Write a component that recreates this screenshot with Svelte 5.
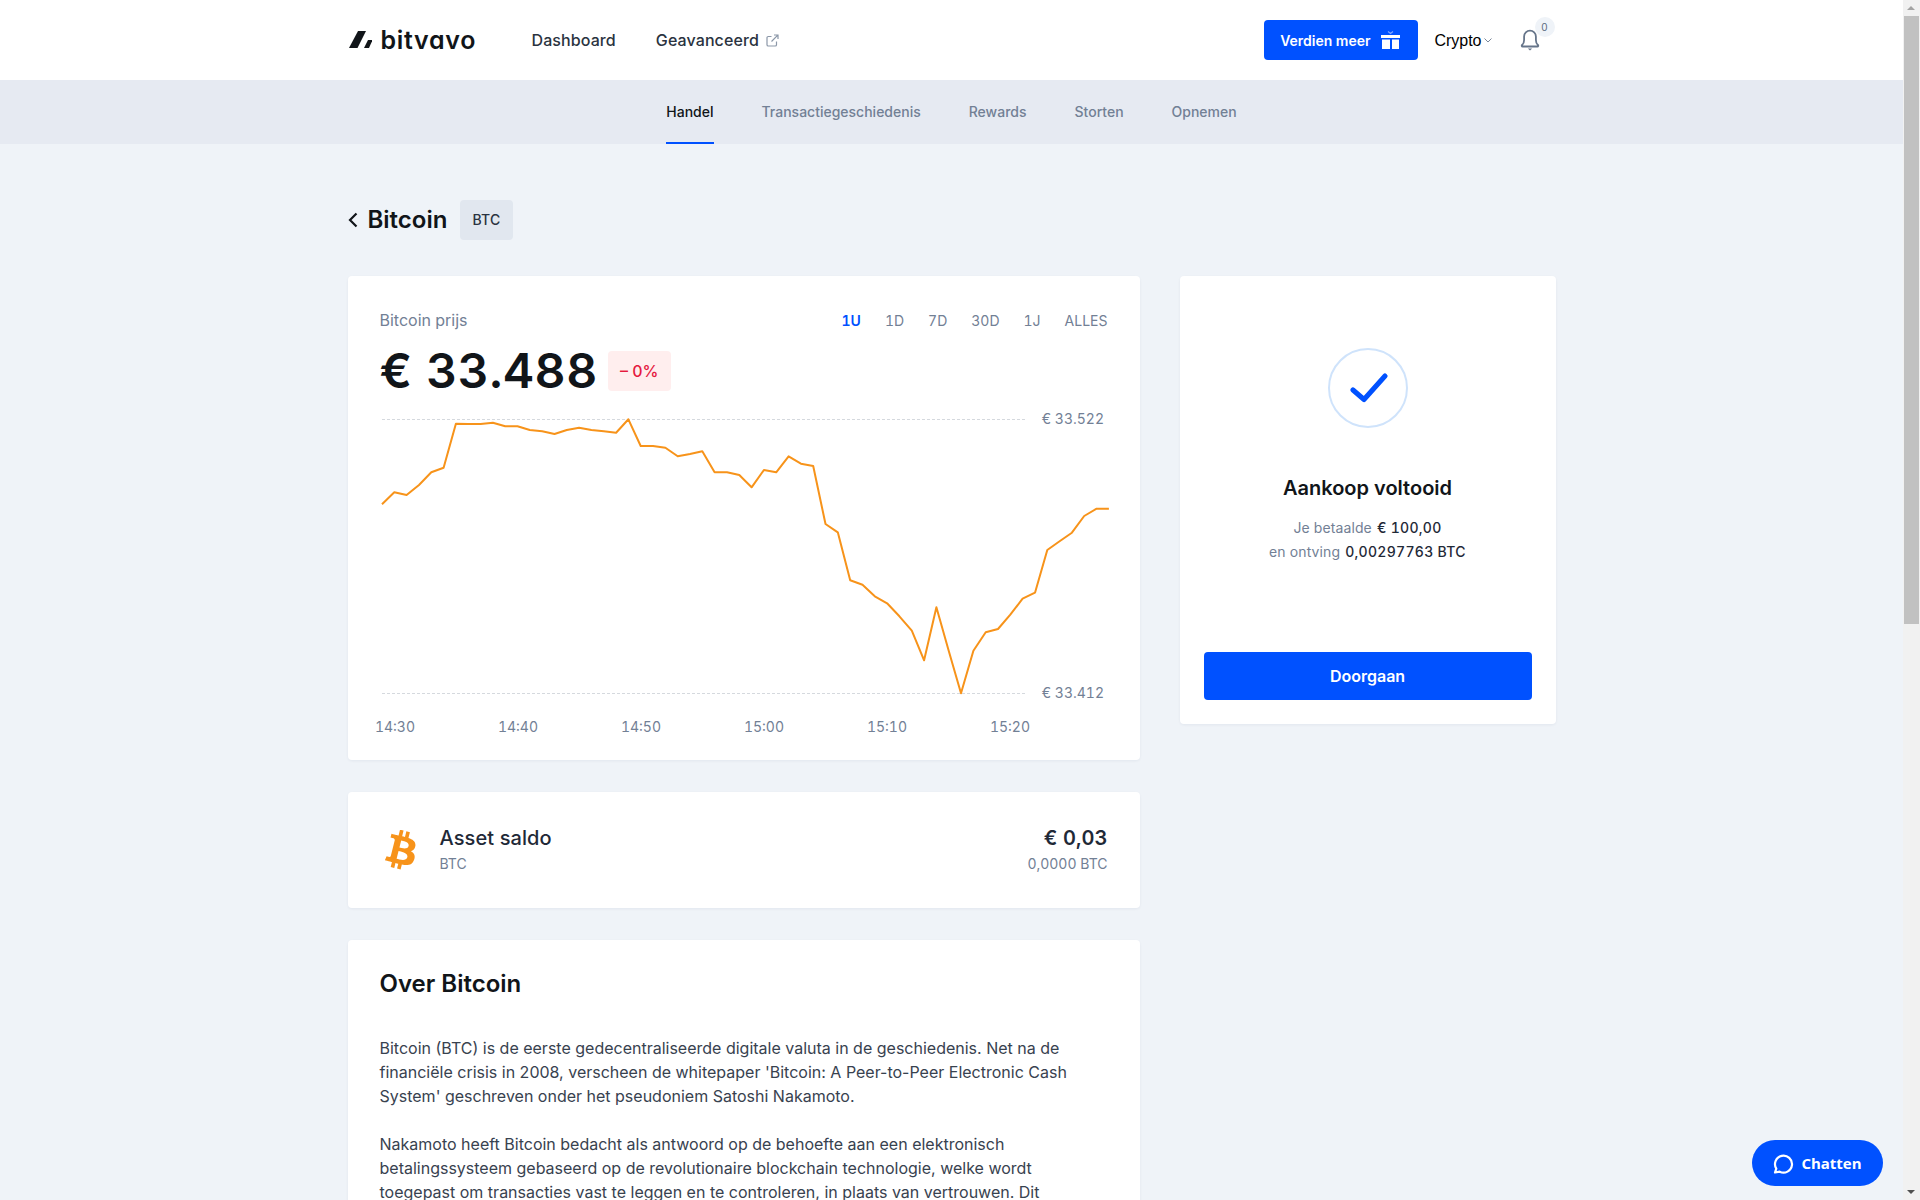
<script>
  const tabs = ['Handel', 'Transactiegeschiedenis', 'Rewards', 'Storten', 'Opnemen'];
  const ranges = ['1U', '1D', '7D', '30D', '1J', 'ALLES'];
  const times = [
    { label: '14:30', x: 47 },
    { label: '14:40', x: 170 },
    { label: '14:50', x: 293 },
    { label: '15:00', x: 416 },
    { label: '15:10', x: 539 },
    { label: '15:20', x: 662 }
  ];

  // y of each price point in the chart, one point per minute
  const prices = [
    104.3, 92.3, 95, 85, 72.3, 67.7, 23.7, 24, 24, 22.7, 26.3, 26.3, 30, 31.3, 34, 30, 27.7, 30, 31.3, 32.7,
    19.3, 46, 46, 47.7, 56.3, 54, 51.3, 72.3, 72.3, 75, 87.3, 70, 72.3, 56.3, 63.7, 66, 124, 132.3, 180.3, 184.7,
    196.3, 203.3, 216.3, 230.7, 260.3, 207.3, 250.7, 293.3, 250.7, 232.3, 229, 214.7, 198.7, 192.7, 150, 141.3,
    132.7, 116, 108.7, 108.7
  ];
  const line = prices.map((y, i) => `${(34 + i * 12.32).toFixed(1)},${y}`).join(' ');
</script>

<div class="shell">
  <div class="page">
    <header class="topbar">
      <div class="wrap topbar-inner">
        <div class="logo">
          <svg width="24" height="17" viewBox="0 0 24 17">
            <path d="M1 17 10 0h8L9.500 17z" fill="#111519" />
            <path d="M16 17 20 9h4.500L21 17z" fill="#111519" />
          </svg>
          <span class="logo-text">bitvavo</span>
        </div>
        <nav class="mainnav">
          <span>Dashboard</span>
          <span class="ext">
            Geavanceerd
            <svg width="13" height="13" viewBox="0 0 13 13" fill="none" stroke="#8b97a8" stroke-width="1.2">
              <path d="M10.500 7.500v3.200a1.300 1.300 0 0 1-1.300 1.300H2.300A1.300 1.300 0 0 1 1 10.700V3.800a1.300 1.300 0 0 1 1.300-1.300h3.200" />
              <path d="M5.500 7.500 11.800 1.200M8 1h4v4" />
            </svg>
          </span>
        </nav>
        <div class="actions">
          <button class="earn">
            Verdien meer
            <svg width="19" height="18" viewBox="0 0 19 18">
              <path d="M7 .5l2.500 2L12 .5" fill="none" stroke="#7fa6ff" stroke-width="1.200" />
              <path d="M0 4h19v3H0zM1 8.500h8V18H1zM11 8.500h7V18h-7z" fill="#fff" />
            </svg>
          </button>
          <span class="crypto">
            Crypto
            <svg width="8" height="5" viewBox="0 0 8 5" fill="none" stroke="#7b8798" stroke-width="1">
              <path d="M.5.500 4 4l3.500-3.500" />
            </svg>
          </span>
          <span class="bell">
            <svg width="20" height="22" viewBox="0 0 20 22" fill="none" stroke="#66758a" stroke-width="1.800">
              <path d="M2.500 17.500h15c.8 0 1-1 .4-1.500-1.400-1.200-2-2.800-2-5V7.500a5.900 5.900 0 0 0-11.800 0V11c0 2.200-.6 3.800-2 5-.6.500-.4 1.500.4 1.500z" stroke-linejoin="round" />
              <path d="M7.800 19.500h4.400L10 21.500z" fill="#66758a" stroke="none" />
            </svg>
            <span class="count">0</span>
          </span>
        </div>
      </div>
    </header>

    <nav class="subnav">
      {#each tabs as tab, i}
        <span class="tab" class:active={i === 0}>{tab}</span>
      {/each}
    </nav>

    <main class="wrap">
      <div class="title">
        <svg width="10" height="16" viewBox="0 0 10 16" fill="none" stroke="#111519" stroke-width="2.200">
          <path d="M8.500 1.500 2 8l6.500 6.500" />
        </svg>
        <h1>Bitcoin</h1>
        <span class="pill">BTC</span>
      </div>

      <div class="columns">
        <div class="left">
          <section class="card chart-card">
            <div class="chart-head">
              <span class="muted">Bitcoin prijs</span>
              <div class="ranges">
                {#each ranges as range, i}
                  <span class:on={i === 0}>{range}</span>
                {/each}
              </div>
            </div>
            <div class="price-row">
              <span class="price">€ 33.488</span>
              <span class="change">– 0%</span>
            </div>
            <svg class="chart" width="792" height="360" viewBox="0 0 792 360">
              <line x1="34" x2="677" y1="19.500" y2="19.500" class="grid" />
              <line x1="34" x2="677" y1="293.500" y2="293.500" class="grid" />
              <polyline points={line} fill="none" stroke="#f7931a" stroke-width="2" stroke-linejoin="round" />
              <text x="756" y="24" text-anchor="end">€ 33.522</text>
              <text x="756" y="298" text-anchor="end">€ 33.412</text>
              {#each times as t}
                <text x={t.x} y="332" text-anchor="middle">{t.label}</text>
              {/each}
            </svg>
          </section>

          <section class="card asset">
            <svg class="coin" width="36" height="40" viewBox="-40 -10 464 532">
              <path transform="rotate(14 192 256)" fill="#f7931a" d="M310.204 242.638c27.73-14.18 45.377-39.39 41.28-81.3-5.358-57.351-52.458-76.573-114.85-81.929V0h-48.528v77.203c-12.605 0-25.525.315-38.444.63V0h-48.528v79.409c-17.842.539-38.622.276-97.37 0v51.678c38.314-.678 58.417-3.14 63.023 21.427v217.429c-2.925 19.492-18.524 16.685-53.255 16.071L3.765 443.68c88.481 0 97.37.315 97.37.315V512h48.528v-67.06c13.234.315 26.154.315 38.444.315V512h48.528v-68.005c81.299-4.412 135.647-24.894 142.895-101.467 5.671-61.446-23.32-88.862-69.326-99.89zM150.608 134.553c27.415 0 113.126-8.507 113.126 48.528 0 54.515-85.71 48.212-113.126 48.212v-96.74zm0 251.776V279.821c32.772 0 133.127-9.138 133.127 53.255-.001 60.186-100.355 53.253-133.127 53.253z" />
            </svg>
            <div class="asset-name">
              <strong>Asset saldo</strong>
              <span class="muted small">BTC</span>
            </div>
            <div class="asset-value">
              <strong>€ 0,03</strong>
              <span class="muted small">0,0000 BTC</span>
            </div>
          </section>

          <section class="card about">
            <h2>Over Bitcoin</h2>
            <p>Bitcoin (BTC) is de eerste gedecentraliseerde digitale valuta in de geschiedenis. Net na de financiële crisis in 2008, verscheen de whitepaper 'Bitcoin: A Peer-to-Peer Electronic Cash System' geschreven onder het pseudoniem Satoshi Nakamoto.</p>
            <p>Nakamoto heeft Bitcoin bedacht als antwoord op de behoefte aan een elektronisch betalingssysteem gebaseerd op de revolutionaire blockchain technologie, welke wordt toegepast om transacties vast te leggen en te controleren, in plaats van vertrouwen. Dit</p>
          </section>
        </div>

        <aside class="card done">
          <div class="check">
            <svg width="38" height="30" viewBox="0 0 38 30" fill="none" stroke="#0051ff" stroke-width="5" stroke-linecap="round" stroke-linejoin="round">
              <path d="M3 17l11 9.500L35 3" />
            </svg>
          </div>
          <h3>Aankoop voltooid</h3>
          <p class="summary"><span class="muted">Je betaalde</span> <b>€ 100,00</b></p>
          <p class="summary"><span class="muted">en ontving</span> <b>0,00297763 BTC</b></p>
          <button class="go">Doorgaan</button>
        </aside>
      </div>
    </main>
  </div>

  <div class="scrollbar">
    <span class="arrow up"></span>
    <span class="thumb"></span>
    <span class="arrow down"></span>
  </div>
</div>

<button class="chat">
  <svg width="21" height="21" viewBox="0 0 21 21" fill="none" stroke="#fff" stroke-width="2.200">
    <path d="M3.300 15.600a8.500 8.500 0 1 1 3.400 3.100L2 19.500z" stroke-linejoin="round" />
  </svg>
  Chatten
</button>

<style>
  :global(body) {
    background: #eff3f8;
    color: #111519;
    font-family: Inter, "Noto Sans", sans-serif;
  }

  .shell {
    display: flex;
    height: 100vh;
    overflow: hidden;
  }

  .page {
    flex: 1;
    min-width: 0;
    overflow: hidden;
  }

  .wrap {
    width: 1208px;
    margin: 0 auto;
  }

  .topbar {
    background: #fff;
    height: 80px;
  }

  .topbar-inner {
    display: flex;
    align-items: center;
    height: 100%;
  }

  .logo {
    display: flex;
    align-items: center;
    gap: 9px;
    width: 184px;
  }

  .logo svg {
    margin-top: -1px;
  }

  .logo-text {
    font-size: 25px;
    font-weight: 600;
    letter-spacing: 0.7px;
    line-height: 1;
    font-feature-settings: "cv11";
  }

  .mainnav {
    display: flex;
    gap: 40px;
    font-size: 16px;
    font-weight: 500;
    letter-spacing: 0.1px;
    color: #2a3340;
  }

  .ext {
    display: flex;
    align-items: center;
    gap: 7px;
  }

  .actions {
    margin-left: auto;
    display: flex;
    align-items: center;
  }

  .earn {
    display: flex;
    align-items: center;
    justify-content: center;
    gap: 10px;
    width: 154px;
    height: 40px;
    border: 0;
    border-radius: 4px;
    background: #0051ff;
    color: #fff;
    font: 600 14px Inter, sans-serif;
  }

  .earn svg {
    margin-right: 3px;
  }

  .crypto {
    display: flex;
    align-items: center;
    gap: 2px;
    margin-left: 16px;
    padding-top: 1px;
    font: 16px "Liberation Sans", sans-serif;
    color: #000;
  }

  .bell {
    position: relative;
    display: flex;
    margin-left: 28px;
    margin-right: 16px;
  }

  .count {
    position: absolute;
    top: -12px;
    left: 15px;
    width: 20px;
    height: 20px;
    border-radius: 50%;
    background: #eff3f8;
    color: #5c6b80;
    font-size: 10px;
    line-height: 20px;
    text-align: center;
  }

  .subnav {
    display: flex;
    justify-content: center;
    gap: 48px;
    height: 64px;
    background: #e6eaf2;
    font-size: 14px;
    font-weight: 500;
    color: #728095;
  }

  .tab {
    display: flex;
    align-items: center;
    border-bottom: 2px solid transparent;
  }

  .tab.active {
    color: #111519;
    border-bottom-color: #0051ff;
  }

  .title {
    display: flex;
    align-items: center;
    height: 40px;
    margin: 56px 0 36px;
  }

  h1 {
    margin: -2px 13px 0 10px;
    font-size: 24px;
    font-weight: 600;
  }

  .pill {
    padding: 0 12px;
    line-height: 40px;
    border-radius: 4px;
    background: #e1e7ef;
    font-size: 14px;
    font-weight: 500;
    letter-spacing: 0.3px;
    color: #2a3340;
  }

  .columns {
    display: grid;
    grid-template-columns: 792px 376px;
    gap: 40px;
    align-items: start;
  }

  .left {
    display: flex;
    flex-direction: column;
    gap: 32px;
  }

  .card {
    background: #fff;
    border-radius: 4px;
    box-shadow: 0 1px 3px rgba(20, 40, 80, 0.06);
  }

  .muted {
    color: #728095;
  }

  .small {
    font-size: 14px;
  }

  .chart-card {
    padding: 32px 32px 0;
    height: 484px;
    box-sizing: border-box;
    font-variant-numeric: tabular-nums;
  }

  .chart-head {
    display: flex;
    justify-content: space-between;
    align-items: center;
    height: 24px;
    font-size: 16px;
  }

  .ranges {
    display: flex;
    gap: 24px;
    font-size: 14px;
    color: #728095;
  }

  .ranges .on {
    color: #0051ff;
    font-weight: 600;
  }

  .price-row {
    display: flex;
    align-items: center;
    gap: 10px;
    height: 40px;
    margin-top: 19px;
  }

  .price {
    font-size: 48px;
    font-weight: 600;
    line-height: 40px;
    letter-spacing: 0.6px;
  }

  .change {
    padding: 0 12px;
    line-height: 40px;
    border-radius: 4px;
    background: #ffeeee;
    color: #e5193f;
    font-size: 16px;
    font-weight: 500;
  }

  .chart {
    display: block;
    margin: 9px -32px 0;
  }

  .chart text {
    font-size: 14px;
    fill: #728095;
  }

  .grid {
    stroke: #d5d9de;
    stroke-dasharray: 3 2;
  }

  .asset {
    display: flex;
    align-items: center;
    height: 116px;
    padding: 0 32px;
  }

  .coin {
    margin-left: 4px;
    margin-right: 20px;
  }

  .asset-name,
  .asset-value {
    display: flex;
    flex-direction: column;
    gap: 5px;
    margin-top: -3px;
  }

  .asset-value {
    margin-left: auto;
    align-items: flex-end;
    font-variant-numeric: tabular-nums;
  }

  .asset strong {
    font-size: 20px;
    font-weight: 500;
    letter-spacing: 0.1px;
    color: #1f2937;
  }

  .asset-value strong {
    font-weight: 600;
  }

  .about {
    padding: 29px 32px 32px;
  }

  h2 {
    margin: 0 0 37px;
    font-size: 24px;
    font-weight: 600;
    line-height: 30px;
  }

  .about p {
    margin: 0 0 24px;
    font-size: 16px;
    line-height: 24px;
    color: #38424f;
  }

  .done {
    display: flex;
    flex-direction: column;
    align-items: center;
    height: 448px;
    padding: 72px 24px 24px;
    box-sizing: border-box;
  }

  .check {
    display: flex;
    align-items: center;
    justify-content: center;
    width: 76px;
    height: 76px;
    border: 2px solid #cfe3fb;
    border-radius: 50%;
  }

  .check svg {
    margin-left: 2px;
  }

  h3 {
    margin: 48px 0 16px;
    font-size: 20px;
    font-weight: 600;
    line-height: 24px;
  }

  .summary {
    margin: 0;
    font-size: 14px;
    line-height: 24px;
    letter-spacing: 0.1px;
  }

  .summary b {
    margin-left: 1px;
    font-weight: 500;
    letter-spacing: 0.3px;
    font-variant-numeric: tabular-nums;
    color: #1f2937;
  }

  .go {
    width: 100%;
    height: 48px;
    margin-top: auto;
    border: 0;
    border-radius: 4px;
    background: #0051ff;
    color: #fff;
    font: 600 16px Inter, sans-serif;
  }

  .scrollbar {
    display: flex;
    flex-direction: column;
    width: 17px;
    background: #f1f1f1;
  }

  .thumb {
    width: 15px;
    height: 608px;
    margin-left: 1px;
    background: #c1c1c1;
  }

  .arrow {
    width: 0;
    height: 0;
    margin: 6px 4px;
    border: 4px solid transparent;
    border-top-width: 0;
    border-bottom-color: #a3a3a3;
  }

  .arrow.down {
    margin-top: auto;
    border-top: 4px solid #505050;
    border-bottom: 0;
  }

  .chat {
    position: fixed;
    right: 37px;
    bottom: 14px;
    display: flex;
    align-items: center;
    justify-content: center;
    gap: 7px;
    width: 131px;
    height: 46px;
    border: 0;
    border-radius: 23px;
    background: #0051ff;
    color: #fff;
    font: 700 15px "Open Sans", sans-serif;
  }
</style>
